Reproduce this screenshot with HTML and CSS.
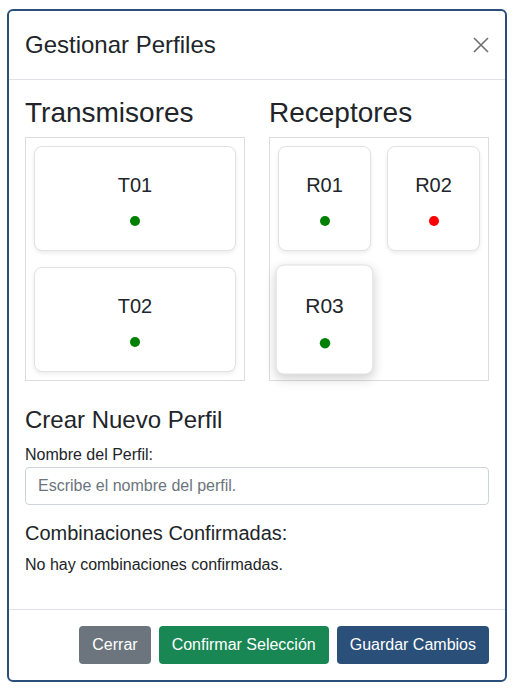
FILE: index.html
```html
<!DOCTYPE html>
<html lang="es">
<head>
<meta charset="utf-8">
<title>Gestionar Perfiles</title>
<link rel="stylesheet" href="styles.css">
</head>
<body>
<div class="modal">
  <div class="modal-header">
    <h2 class="modal-title">Gestionar Perfiles</h2>
    <button class="close" aria-label="Cerrar">
      <svg width="16" height="16" viewBox="0 0 16 16"><path d="M1 1L15 15M15 1L1 15" stroke="#6f6f6f" stroke-width="1.6" fill="none"/></svg>
    </button>
  </div>
  <div class="modal-body">
    <div class="columns">
      <div class="col">
        <h3 class="col-title">Transmisores</h3>
        <div class="box box-single">
          <div class="card"><div class="card-name">T01</div><span class="dot green"></span></div>
          <div class="card"><div class="card-name">T02</div><span class="dot green"></span></div>
        </div>
      </div>
      <div class="col">
        <h3 class="col-title">Receptores</h3>
        <div class="box box-double">
          <div class="card"><div class="card-name">R01</div><span class="dot green"></span></div>
          <div class="card"><div class="card-name">R02</div><span class="dot red"></span></div>
          <div class="card hovered"><div class="card-name">R03</div><span class="dot green"></span></div>
        </div>
      </div>
    </div>
    <h4 class="section-title">Crear Nuevo Perfil</h4>
    <label class="label" for="nombre">Nombre del Perfil:</label>
    <input class="input" id="nombre" type="text" placeholder="Escribe el nombre del perfil.">
    <h5 class="sub-title">Combinaciones Confirmadas:</h5>
    <p class="empty">No hay combinaciones confirmadas.</p>
  </div>
  <div class="modal-footer">
    <button class="btn btn-gray">Cerrar</button>
    <button class="btn btn-green">Confirmar Selección</button>
    <button class="btn btn-blue">Guardar Cambios</button>
  </div>
</div>
</body>
</html>
```
FILE: styles.css
```css
* { box-sizing: border-box; }
html, body { margin: 0; background: #fff; }
body {
  padding: 9px 14px 0 7px;
  font-family: "Liberation Sans", Arial, sans-serif;
  color: #212529;
  font-size: 16px;
  line-height: 1.5;
}
.modal {
  width: 500px;
  border: 2px solid #2a5079;
  border-radius: 6px;
  background: #fff;
}
.modal-header {
  display: flex;
  align-items: center;
  justify-content: space-between;
  padding: 16px;
  border-bottom: 1px solid #dee2e6;
}
.modal-title {
  margin: 0;
  font-size: 24px;
  font-weight: 400;
  line-height: 36px;
}
.close {
  border: 0;
  background: none;
  padding: 0;
  width: 16px;
  height: 16px;
  display: flex;
  cursor: pointer;
}
.modal-body { padding: 16px; }
.columns {
  display: grid;
  grid-template-columns: 1fr 1fr;
  gap: 24px;
}
.col-title {
  margin: 0 0 7px;
  font-size: 28px;
  font-weight: 400;
  line-height: 1.2;
}
.box {
  border: 1px solid #dddddd;
  padding: 8px;
  display: grid;
  gap: 16px;
  align-content: start;
}
.box-single { grid-template-columns: 1fr; }
.box-double { grid-template-columns: 1fr 1fr; }
.card {
  border: 1px solid #e2e2e2;
  border-radius: 8px;
  background: #fff;
  box-shadow: 0 2px 4px rgba(0,0,0,0.08);
  padding: 26px 8px 24px;
  display: flex;
  flex-direction: column;
  align-items: center;
}
.card.hovered {
  transform: scale(1.05);
  box-shadow: 0 4px 10px rgba(0,0,0,0.18);
}
.card-name {
  font-size: 20px;
  line-height: 24px;
  margin-bottom: 19px;
}
.dot {
  width: 10px;
  height: 10px;
  border-radius: 50%;
  display: block;
}
.dot.green { background: #008000; }
.dot.red { background: #ff0000; }
.section-title {
  margin: 25px 0 9px;
  font-size: 24px;
  font-weight: 400;
  line-height: 1.2;
}
.label {
  display: block;
  margin-bottom: 0;
  font-size: 16px;
  line-height: 24px;
}
.input {
  display: block;
  width: 100%;
  height: 38px;
  padding: 6px 12px;
  border: 1px solid #ced4da;
  border-radius: 4px;
  font-family: inherit;
  font-size: 16px;
  color: #212529;
}
.input::placeholder { color: #6c757d; }
.sub-title {
  margin: 16px 0 8px;
  font-size: 20px;
  font-weight: 400;
  line-height: 24px;
}
.empty { margin: 0 0 16px; font-size: 16px; line-height: 24px; }
.modal-footer {
  display: flex;
  justify-content: flex-end;
  gap: 8px;
  padding: 16px;
  border-top: 1px solid #dee2e6;
}
.btn {
  border: 1px solid transparent;
  border-radius: 4px;
  padding: 6px 12px;
  font-family: inherit;
  font-size: 16px;
  line-height: 24px;
  color: #fff;
  cursor: pointer;
}
.btn-gray { background: #6c757d; }
.btn-green { background: #198754; }
.btn-blue { background: #2a5079; }
```
